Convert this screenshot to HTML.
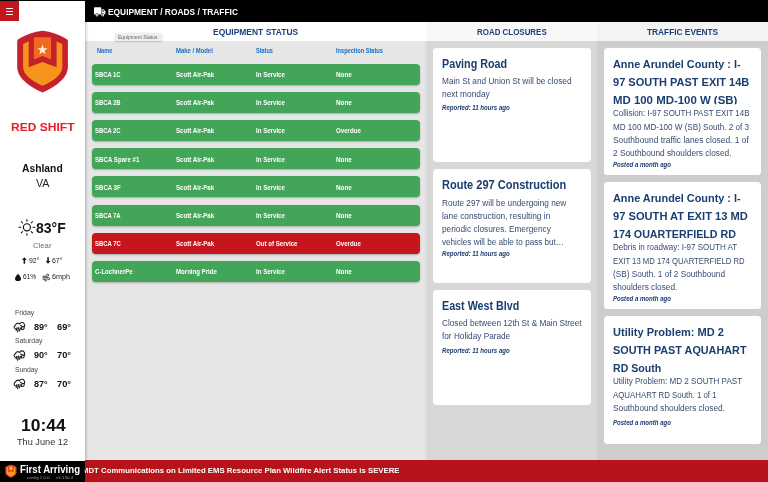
<!DOCTYPE html>
<html><head><meta charset="utf-8">
<style>
*{box-sizing:border-box;margin:0;padding:0}
html,body{width:768px;height:482px;overflow:hidden;background:#d4d4d4;font-family:"Liberation Sans",sans-serif;}
.abs{position:absolute}
.t{position:absolute;white-space:nowrap;line-height:1;transform-origin:0 50%;z-index:6}
#side{left:0;top:0;width:84.8px;height:460.5px;background:#fff;box-shadow:1px 0 3px rgba(0,0,0,.25);z-index:5}
#ham{left:0;top:1px;width:18.9px;height:19.8px;background:#c0161d;z-index:6}
#topline{left:0;top:0;width:768px;height:1.1px;background:#000;z-index:7}
#ham i{position:absolute;left:5.5px;width:7.7px;height:1.3px;background:#fff;border-radius:1px}
#hdr{left:85px;top:0;width:683px;height:22px;background:#000}
#band{left:85px;top:22px;width:682px;height:19px;background:#fff}
#band2{left:427px;top:22px;width:341px;height:19px;background:#f8f8f8}
#band3{left:597px;top:22px;width:171px;height:19px;background:#f3f3f3}
#col1{left:85px;top:41px;width:342px;height:420px;background:#e6e6e6}
#strip{left:424.5px;top:41px;width:2.5px;height:420px;background:#dedede}
#col2{left:427px;top:41px;width:170px;height:420px;background:#d7d7d7}
#col3{left:597px;top:41px;width:171px;height:420px;background:#cdcdcd}
.row{position:absolute;left:92px;width:328px;height:21.1px;border-radius:4px;background:#43a557;box-shadow:0 1px 2px rgba(0,0,0,.25)}
.row.red{background:#c4161c}
.card{position:absolute;background:#fff;border-radius:3.5px}
#tip{left:115.4px;top:33.4px;width:46.2px;height:7.3px;background:#eee;border-radius:1.5px;box-shadow:0 0.5px 1.5px rgba(0,0,0,.3);z-index:8}
#bot1{left:0;top:460.6px;width:84.7px;height:22px;background:#000;z-index:7}
#bot2{left:84px;top:460.2px;width:684px;height:22px;background:#b7131a}
svg{position:absolute;overflow:visible}
</style></head><body>

<div id="hdr" class="abs"></div>
<div id="band" class="abs"></div>
<div id="band2" class="abs"></div>
<div id="band3" class="abs"></div>
<div id="col1" class="abs"></div>
<div id="strip" class="abs"></div>
<div id="col2" class="abs"></div>
<div id="col3" class="abs"></div>
<div class="row" style="top:63.75px"></div><div class="row" style="top:91.90px"></div><div class="row" style="top:120.05px"></div><div class="row" style="top:148.20px"></div><div class="row" style="top:176.35px"></div><div class="row" style="top:204.50px"></div><div class="row red" style="top:232.65px"></div><div class="row" style="top:260.80px"></div>
<div class="card" style="left:433.3px;top:48.2px;width:157.3px;height:113.8px"></div>
<div class="card" style="left:433.3px;top:169.2px;width:157.3px;height:113.8px"></div>
<div class="card" style="left:433.3px;top:290.2px;width:157.3px;height:114.8px"></div>
<div class="card" style="left:604.4px;top:48.3px;width:157.1px;height:127px"></div>
<div class="card" style="left:604.4px;top:182.3px;width:157.1px;height:127px"></div>
<div class="card" style="left:604.4px;top:316.4px;width:157.1px;height:127.4px"></div>
<div id="tip" class="abs"></div>

<div id="side" class="abs"></div>
<div id="ham" class="abs"><i style="top:6.85px"></i><i style="top:9.7px"></i><i style="top:12.55px"></i></div>
<div id="topline" class="abs"></div>
<div id="bot2" class="abs"></div>
<div id="bot1" class="abs"></div>

<!-- full-canvas icon layer -->
<svg style="left:0;top:0;z-index:9" width="768" height="482" viewBox="0 0 768 482">
  <!-- truck -->
  <g fill="#fff">
    <rect x="94" y="7.2" width="7.3" height="7.4" rx="0.7"/>
    <path d="M101.7 9.3 h1.9 l1.7 2 v3.3 h-3.6z"/>
    <path d="M102.4 10.2 h1 l1 1.3 h-2z" fill="#000"/>
    <circle cx="97" cy="15.1" r="1.9" fill="#000"/>
    <circle cx="102.7" cy="15.1" r="1.9" fill="#000"/>
    <circle cx="97" cy="15.1" r="1.45"/>
    <circle cx="102.7" cy="15.1" r="1.45"/>
    <circle cx="97" cy="15.1" r="0.55" fill="#000"/>
    <circle cx="102.7" cy="15.1" r="0.55" fill="#000"/>
  </g>
  <!-- shield -->
  <g>
    <path d="M17.2 41 Q17.2 39.6 18.6 38.9 Q30 32.4 42.5 30.8 Q55 32.4 66.5 38.9 Q67.9 39.6 67.9 41 L67.9 67 Q67.9 81 42.5 92.6 Q17.2 81 17.2 67Z" fill="#c6202a"/>
    <path d="M23.1 44 L29 41.2 L56 41.2 L62.3 44 L62.3 67 Q62.3 77 42.5 85.8 Q23.1 77 23.1 67Z" fill="#f7941e"/>
    <path d="M28.7 36 L56.6 36 L56.6 67.2 L42.5 62 L28.7 67.2Z" fill="#c6202a"/>
    <path d="M33.9 37.2 L51 37.2 L51 59.6 L42.5 55.9 L33.9 59.6Z" fill="#f26a21"/>
    <path id="star" fill="#fff3cf" d="M42.50 44.60 L43.76 48.16 L47.54 48.26 L44.54 50.56 L45.62 54.19 L42.50 52.05 L39.38 54.19 L40.46 50.56 L37.46 48.26 L41.24 48.16Z"/>
  </g>
  <!-- sun -->
  <g stroke="#111" fill="none" stroke-linecap="round">
    <circle cx="26.9" cy="227.3" r="3.55" stroke-width="1.15"/>
    <g stroke-width="1.05">
      <path d="M26.9 219.4v1.8M26.9 233.4v1.8M19 227.3h1.8M33 227.3h1.8M21.3 221.7l1.3 1.3M31.2 231.6l1.3 1.3M32.5 221.7l-1.3 1.3M22.6 231.6l-1.3 1.3"/>
    </g>
  </g>
  <!-- arrows -->
  <g fill="#111">
    <path d="M24.35 257.2 l2.3 2.7 h-1.55 v3.9 h-1.5 v-3.9 h-1.55z"/>
    <path d="M48.05 263.8 l2.3 -2.7 h-1.55 v-3.9 h-1.5 v3.9 h-1.55z"/>
    <!-- drop -->
    <path d="M18 273.8 Q21 277.3 21 278.4 A3 2.6 0 0 1 15 278.4 Q15 277.3 18 273.8Z"/>
  </g>
  <!-- wind -->
  <g stroke="#111" stroke-width="0.8" fill="none" stroke-linecap="round">
    <path d="M43 276.2h4.6a1.1 1.1 0 1 0 -1.1 -1.2"/>
    <path d="M43 277.7h5.6a1 1 0 1 1 -1 1.1"/>
    <path d="M43 279.2h2.6a0.9 0.9 0 1 1 -0.9 1"/>
  </g>
  <!-- clouds -->
  <g stroke="#111" stroke-width="1.05" fill="none" stroke-linecap="round" stroke-linejoin="round">
    <path d="M15.6 329 C13.6 328.4 13.6 325.6 15.6 325.2 C15.8 323.2 18.4 322.6 19.6 324 C20.4 322 23.6 321.8 24.2 324 C25 325 24.8 326.4 24 327 C24.6 328.2 23.8 329.6 22.4 329.6"/>
    <path d="M20.6 325.4 C21.6 326.4 23 326.8 24 326.6"/>
    <path d="M16.9 327.8 l-0.7 2.6 M18.6 327.6 l-1 4.2 M20.3 327.8 l-0.8 3 M21.8 327.4 l-0.5 2" stroke-width="1.15"/>
  </g>
  <g transform="translate(0 28.45)" stroke="#111" stroke-width="1.05" fill="none" stroke-linecap="round" stroke-linejoin="round">
    <path d="M15.6 329 C13.6 328.4 13.6 325.6 15.6 325.2 C15.8 323.2 18.4 322.6 19.6 324 C20.4 322 23.6 321.8 24.2 324 C25 325 24.8 326.4 24 327 C24.6 328.2 23.8 329.6 22.4 329.6"/>
    <path d="M20.6 325.4 C21.6 326.4 23 326.8 24 326.6"/>
    <path d="M16.9 327.8 l-0.7 2.6 M18.6 327.6 l-1 4.2 M20.3 327.8 l-0.8 3 M21.8 327.4 l-0.5 2" stroke-width="1.15"/>
  </g>
  <g transform="translate(0 56.9)" stroke="#111" stroke-width="1.05" fill="none" stroke-linecap="round" stroke-linejoin="round">
    <path d="M15.6 329 C13.6 328.4 13.6 325.6 15.6 325.2 C15.8 323.2 18.4 322.6 19.6 324 C20.4 322 23.6 321.8 24.2 324 C25 325 24.8 326.4 24 327 C24.6 328.2 23.8 329.6 22.4 329.6"/>
    <path d="M20.6 325.4 C21.6 326.4 23 326.8 24 326.6"/>
    <path d="M16.9 327.8 l-0.7 2.6 M18.6 327.6 l-1 4.2 M20.3 327.8 l-0.8 3 M21.8 327.4 l-0.5 2" stroke-width="1.15"/>
  </g>
  <!-- small shield bottom -->
  <g>
    <path d="M5.4 467 Q8 465.2 10.9 464.8 Q13.8 465.2 16.4 467 L16.4 472.5 Q16.4 475.5 10.9 477.8 Q5.4 475.5 5.4 472.5Z" fill="#e8481f"/>
    <path d="M6.7 467.6 L15.1 467.6 L15.1 472.4 Q15.1 474.6 10.9 476.4 Q6.7 474.6 6.7 472.4Z" fill="#f9a11b"/>
    <path d="M8 466 L13.8 466 L13.8 472.6 L10.9 471.4 L8 472.6Z" fill="#e8481f"/>
    <path d="M9.2 466.2 L12.6 466.2 L12.6 470.8 L10.9 470.1 L9.2 470.8Z" fill="#f47a20"/>
    <circle cx="10.9" cy="468.5" r="0.9" fill="#fff3cf"/>
  </g>
</svg>
<div id="txt" style="position:absolute;left:0;top:0;width:768px;height:482px;z-index:10;will-change:transform">
<span class="t" style="left:108.00px;top:7.56px;font-size:9.0px;color:#fff;transform:scaleX(0.9319);font-weight:bold;">EQUIPMENT / ROADS / TRAFFIC</span>
<span class="t" style="left:213.20px;top:27.47px;font-size:9.4px;color:#1b4079;transform:scaleX(0.9021);font-weight:bold;">EQUIPMENT STATUS</span>
<span class="t" style="left:477.20px;top:27.86px;font-size:8.8px;color:#1b4079;transform:scaleX(0.9026);font-weight:bold;">ROAD CLOSURES</span>
<span class="t" style="left:647.10px;top:27.86px;font-size:8.8px;color:#1b4079;transform:scaleX(0.9447);font-weight:bold;">TRAFFIC EVENTS</span>
<span class="t" style="left:117.90px;top:34.59px;font-size:5.0px;color:#666;transform:scaleX(0.9983);z-index:9;">Equipment Status</span>
<span class="t" style="left:97.00px;top:47.72px;font-size:6.6px;color:#1b6ec2;transform:scaleX(0.8575);font-weight:bold;">Name</span>
<span class="t" style="left:176.20px;top:47.72px;font-size:6.6px;color:#1b6ec2;transform:scaleX(0.8967);font-weight:bold;">Make / Model</span>
<span class="t" style="left:256.20px;top:47.72px;font-size:6.6px;color:#1b6ec2;transform:scaleX(0.8386);font-weight:bold;">Status</span>
<span class="t" style="left:335.60px;top:47.72px;font-size:6.6px;color:#1b6ec2;transform:scaleX(0.8534);font-weight:bold;">Inspection Status</span>
<span class="t" style="left:94.90px;top:71.08px;font-size:7.0px;color:#fff;transform:scaleX(0.8396);font-weight:bold;">SBCA 1C</span>
<span class="t" style="left:175.90px;top:71.08px;font-size:7.0px;color:#fff;transform:scaleX(0.8736);font-weight:bold;">Scott Air-Pak</span>
<span class="t" style="left:256.00px;top:71.08px;font-size:7.0px;color:#fff;transform:scaleX(0.8738);font-weight:bold;">In Service</span>
<span class="t" style="left:336.30px;top:71.08px;font-size:7.0px;color:#fff;transform:scaleX(0.9086);font-weight:bold;">None</span>
<span class="t" style="left:94.90px;top:99.23px;font-size:7.0px;color:#fff;transform:scaleX(0.8396);font-weight:bold;">SBCA 2B</span>
<span class="t" style="left:175.90px;top:99.23px;font-size:7.0px;color:#fff;transform:scaleX(0.8736);font-weight:bold;">Scott Air-Pak</span>
<span class="t" style="left:256.00px;top:99.23px;font-size:7.0px;color:#fff;transform:scaleX(0.8738);font-weight:bold;">In Service</span>
<span class="t" style="left:336.30px;top:99.23px;font-size:7.0px;color:#fff;transform:scaleX(0.9086);font-weight:bold;">None</span>
<span class="t" style="left:94.90px;top:127.38px;font-size:7.0px;color:#fff;transform:scaleX(0.8396);font-weight:bold;">SBCA 2C</span>
<span class="t" style="left:175.90px;top:127.38px;font-size:7.0px;color:#fff;transform:scaleX(0.8736);font-weight:bold;">Scott Air-Pak</span>
<span class="t" style="left:256.00px;top:127.38px;font-size:7.0px;color:#fff;transform:scaleX(0.8738);font-weight:bold;">In Service</span>
<span class="t" style="left:336.30px;top:127.38px;font-size:7.0px;color:#fff;transform:scaleX(0.8750);font-weight:bold;">Overdue</span>
<span class="t" style="left:94.90px;top:155.53px;font-size:7.0px;color:#fff;transform:scaleX(0.8750);font-weight:bold;">SBCA Spare #1</span>
<span class="t" style="left:175.90px;top:155.53px;font-size:7.0px;color:#fff;transform:scaleX(0.8736);font-weight:bold;">Scott Air-Pak</span>
<span class="t" style="left:256.00px;top:155.53px;font-size:7.0px;color:#fff;transform:scaleX(0.8738);font-weight:bold;">In Service</span>
<span class="t" style="left:336.30px;top:155.53px;font-size:7.0px;color:#fff;transform:scaleX(0.9086);font-weight:bold;">None</span>
<span class="t" style="left:94.90px;top:183.68px;font-size:7.0px;color:#fff;transform:scaleX(0.8615);font-weight:bold;">SBCA 3F</span>
<span class="t" style="left:175.90px;top:183.68px;font-size:7.0px;color:#fff;transform:scaleX(0.8736);font-weight:bold;">Scott Air-Pak</span>
<span class="t" style="left:256.00px;top:183.68px;font-size:7.0px;color:#fff;transform:scaleX(0.8738);font-weight:bold;">In Service</span>
<span class="t" style="left:336.30px;top:183.68px;font-size:7.0px;color:#fff;transform:scaleX(0.9086);font-weight:bold;">None</span>
<span class="t" style="left:94.90px;top:211.83px;font-size:7.0px;color:#fff;transform:scaleX(0.8396);font-weight:bold;">SBCA 7A</span>
<span class="t" style="left:175.90px;top:211.83px;font-size:7.0px;color:#fff;transform:scaleX(0.8736);font-weight:bold;">Scott Air-Pak</span>
<span class="t" style="left:256.00px;top:211.83px;font-size:7.0px;color:#fff;transform:scaleX(0.8738);font-weight:bold;">In Service</span>
<span class="t" style="left:336.30px;top:211.83px;font-size:7.0px;color:#fff;transform:scaleX(0.9086);font-weight:bold;">None</span>
<span class="t" style="left:94.90px;top:239.98px;font-size:7.0px;color:#fff;transform:scaleX(0.8461);font-weight:bold;">SBCA 7C</span>
<span class="t" style="left:175.90px;top:239.98px;font-size:7.0px;color:#fff;transform:scaleX(0.8736);font-weight:bold;">Scott Air-Pak</span>
<span class="t" style="left:256.00px;top:239.98px;font-size:7.0px;color:#fff;transform:scaleX(0.8750);font-weight:bold;">Out of Service</span>
<span class="t" style="left:336.30px;top:239.98px;font-size:7.0px;color:#fff;transform:scaleX(0.8750);font-weight:bold;">Overdue</span>
<span class="t" style="left:94.90px;top:268.13px;font-size:7.0px;color:#fff;transform:scaleX(0.8654);font-weight:bold;">C-LochnerPe</span>
<span class="t" style="left:175.90px;top:268.13px;font-size:7.0px;color:#fff;transform:scaleX(0.8671);font-weight:bold;">Morning Pride</span>
<span class="t" style="left:256.00px;top:268.13px;font-size:7.0px;color:#fff;transform:scaleX(0.8738);font-weight:bold;">In Service</span>
<span class="t" style="left:336.30px;top:268.13px;font-size:7.0px;color:#fff;transform:scaleX(0.9086);font-weight:bold;">None</span>
<span class="t" style="left:10.80px;top:122.06px;font-size:11.5px;color:#ea1c24;transform:scaleX(1.0462);font-weight:bold;">RED SHIFT</span>
<span class="t" style="left:22.40px;top:163.34px;font-size:10.5px;color:#111;transform:scaleX(0.9826);font-weight:bold;">Ashland</span>
<span class="t" style="left:36.00px;top:178.68px;font-size:10px;color:#222;transform:scaleX(1.0716);">VA</span>
<span class="t" style="left:36.00px;top:220.85px;font-size:14px;color:#111;transform:scaleX(1.0026);font-weight:bold;">83°F</span>
<span class="t" style="left:33.00px;top:241.94px;font-size:8px;color:#6b6b6b;transform:scaleX(0.9677);">Clear</span>
<span class="t" style="left:28.70px;top:257.87px;font-size:6.7px;color:#222;transform:scaleX(1.0383);">92°</span>
<span class="t" style="left:52.40px;top:257.87px;font-size:6.7px;color:#222;transform:scaleX(1.0383);">67°</span>
<span class="t" style="left:22.80px;top:274.47px;font-size:6.7px;color:#222;transform:scaleX(0.9862);">61%</span>
<span class="t" style="left:51.80px;top:274.47px;font-size:6.7px;color:#222;transform:scaleX(1.0760);">6mph</span>
<span class="t" style="left:14.70px;top:309.03px;font-size:7px;color:#444;transform:scaleX(0.9872);">Friday</span>
<span class="t" style="left:33.70px;top:322.66px;font-size:9px;color:#111;transform:scaleX(1.0066);font-weight:bold;">89°</span>
<span class="t" style="left:56.70px;top:322.66px;font-size:9px;color:#111;transform:scaleX(1.0287);font-weight:bold;">69°</span>
<span class="t" style="left:14.70px;top:337.48px;font-size:7px;color:#444;transform:scaleX(0.9780);">Saturday</span>
<span class="t" style="left:33.70px;top:351.11px;font-size:9px;color:#111;transform:scaleX(1.0066);font-weight:bold;">90°</span>
<span class="t" style="left:56.70px;top:351.11px;font-size:9px;color:#111;transform:scaleX(1.0287);font-weight:bold;">70°</span>
<span class="t" style="left:14.70px;top:365.93px;font-size:7px;color:#444;transform:scaleX(0.9688);">Sunday</span>
<span class="t" style="left:33.70px;top:379.56px;font-size:9px;color:#111;transform:scaleX(1.0066);font-weight:bold;">87°</span>
<span class="t" style="left:56.70px;top:379.56px;font-size:9px;color:#111;transform:scaleX(1.0287);font-weight:bold;">70°</span>
<span class="t" style="left:20.60px;top:416.51px;font-size:17px;color:#111;transform:scaleX(1.0258);font-weight:bold;">10:44</span>
<span class="t" style="left:17.25px;top:438.06px;font-size:9px;color:#333;transform:scaleX(1.0203);">Thu June 12</span>
<span class="t" style="left:19.90px;top:465.39px;font-size:10.4px;color:#fff;transform:scaleX(0.9258);font-weight:bold;z-index:8;">First Arriving</span>
<span class="t" style="left:26.70px;top:475.68px;font-size:4.2px;color:#999;transform:scaleX(1.0392);z-index:8;">config 1.0.0</span>
<span class="t" style="left:56.00px;top:475.68px;font-size:4.2px;color:#999;transform:scaleX(1.0706);z-index:8;">v3.130.4</span>
<span class="t" style="left:82.00px;top:467.19px;font-size:7.9px;color:#fff;transform:scaleX(0.9864);font-weight:bold;clip-path:inset(0 0 0 2.75px);">MDT Communications on Limited EMS Resource Plan Wildfire Alert Status is SEVERE</span>
<span class="t" style="left:442.30px;top:57.52px;font-size:12px;color:#193e6f;transform:scaleX(0.8957);font-weight:bold;">Paving Road</span>
<span class="t" style="left:442.30px;top:77.05px;font-size:8.4px;color:#364c70;transform:scaleX(0.9865);">Main St and Union St will be closed</span>
<span class="t" style="left:442.30px;top:90.20px;font-size:8.4px;color:#364c70;transform:scaleX(0.9968);">next monday</span>
<span class="t" style="left:442.30px;top:105.47px;font-size:6.7px;color:#1b3c6e;transform:scaleX(0.9080);font-weight:bold;font-style:italic;">Reported: 11 hours ago</span>
<span class="t" style="left:442.30px;top:178.52px;font-size:12px;color:#193e6f;transform:scaleX(0.9184);font-weight:bold;">Route 297 Construction</span>
<span class="t" style="left:442.30px;top:198.65px;font-size:8.4px;color:#364c70;transform:scaleX(0.9851);">Route 297 will be undergoing new</span>
<span class="t" style="left:442.30px;top:211.80px;font-size:8.4px;color:#364c70;transform:scaleX(0.9984);">lane construction, resulting in</span>
<span class="t" style="left:442.30px;top:224.95px;font-size:8.4px;color:#364c70;transform:scaleX(0.9913);">periodic closures. Emergency</span>
<span class="t" style="left:442.30px;top:238.10px;font-size:8.4px;color:#364c70;transform:scaleX(0.9706);">vehicles will be able to pass but…</span>
<span class="t" style="left:442.30px;top:250.57px;font-size:6.7px;color:#1b3c6e;transform:scaleX(0.9080);font-weight:bold;font-style:italic;">Reported: 11 hours ago</span>
<span class="t" style="left:442.30px;top:299.52px;font-size:12px;color:#193e6f;transform:scaleX(0.8939);font-weight:bold;">East West Blvd</span>
<span class="t" style="left:442.30px;top:319.25px;font-size:8.4px;color:#364c70;transform:scaleX(0.9825);">Closed between 12th St &amp; Main Street</span>
<span class="t" style="left:442.30px;top:332.40px;font-size:8.4px;color:#364c70;transform:scaleX(0.9832);">for Holiday Parade</span>
<span class="t" style="left:442.30px;top:347.97px;font-size:6.7px;color:#1b3c6e;transform:scaleX(0.9080);font-weight:bold;font-style:italic;">Reported: 11 hours ago</span>
<span class="t" style="left:613.10px;top:58.80px;font-size:11px;color:#193e6f;transform:scaleX(0.9881);font-weight:bold;">Anne Arundel County : I-</span>
<span class="t" style="left:613.10px;top:76.95px;font-size:11px;color:#193e6f;transform:scaleX(1.0014);font-weight:bold;">97 SOUTH PAST EXIT 14B</span>
<span class="t" style="left:613.10px;top:95.10px;font-size:11px;color:#193e6f;transform:scaleX(1.0376);font-weight:bold;clip-path:inset(0 0 1.9px 0);">MD 100 MD-100 W (SB)</span>
<span class="t" style="left:612.70px;top:109.40px;font-size:8.3px;color:#364c70;transform:scaleX(0.9581);">Collision: I-97 SOUTH PAST EXIT 14B</span>
<span class="t" style="left:612.70px;top:122.55px;font-size:8.3px;color:#364c70;transform:scaleX(0.9773);">MD 100 MD-100 W (SB) South. 2 of 3</span>
<span class="t" style="left:612.70px;top:135.70px;font-size:8.3px;color:#364c70;transform:scaleX(1.0129);">Southbound traffic lanes closed. 1 of</span>
<span class="t" style="left:612.70px;top:148.85px;font-size:8.3px;color:#364c70;transform:scaleX(0.9996);">2 Southbound shoulders closed.</span>
<span class="t" style="left:612.80px;top:161.57px;font-size:6.7px;color:#1b3c6e;transform:scaleX(0.9060);font-weight:bold;font-style:italic;">Posted a month ago</span>
<span class="t" style="left:613.10px;top:192.80px;font-size:11px;color:#193e6f;transform:scaleX(0.9881);font-weight:bold;">Anne Arundel County : I-</span>
<span class="t" style="left:613.10px;top:210.95px;font-size:11px;color:#193e6f;transform:scaleX(1.0116);font-weight:bold;">97 SOUTH AT EXIT 13 MD</span>
<span class="t" style="left:613.10px;top:229.10px;font-size:11px;color:#193e6f;transform:scaleX(0.9722);font-weight:bold;clip-path:inset(0 0 1.9px 0);">174 QUARTERFIELD RD</span>
<span class="t" style="left:612.70px;top:243.40px;font-size:8.3px;color:#364c70;transform:scaleX(0.9671);">Debris in roadway: I-97 SOUTH AT</span>
<span class="t" style="left:612.70px;top:256.55px;font-size:8.3px;color:#364c70;transform:scaleX(0.9284);">EXIT 13 MD 174 QUARTERFIELD RD</span>
<span class="t" style="left:612.70px;top:269.70px;font-size:8.3px;color:#364c70;transform:scaleX(0.9911);">(SB) South. 1 of 2 Southbound</span>
<span class="t" style="left:612.70px;top:282.85px;font-size:8.3px;color:#364c70;transform:scaleX(0.9958);">shoulders closed.</span>
<span class="t" style="left:612.80px;top:295.67px;font-size:6.7px;color:#1b3c6e;transform:scaleX(0.9060);font-weight:bold;font-style:italic;">Posted a month ago</span>
<span class="t" style="left:613.10px;top:326.80px;font-size:11px;color:#193e6f;transform:scaleX(1.0025);font-weight:bold;">Utility Problem: MD 2</span>
<span class="t" style="left:613.10px;top:344.95px;font-size:11px;color:#193e6f;transform:scaleX(0.9840);font-weight:bold;">SOUTH PAST AQUAHART</span>
<span class="t" style="left:613.10px;top:363.10px;font-size:11px;color:#193e6f;transform:scaleX(0.9620);font-weight:bold;clip-path:inset(0 0 1.9px 0);">RD South</span>
<span class="t" style="left:612.70px;top:377.40px;font-size:8.3px;color:#364c70;transform:scaleX(0.9735);">Utility Problem: MD 2 SOUTH PAST</span>
<span class="t" style="left:612.70px;top:390.55px;font-size:8.3px;color:#364c70;transform:scaleX(0.9462);">AQUAHART RD South. 1 of 1</span>
<span class="t" style="left:612.70px;top:403.70px;font-size:8.3px;color:#364c70;transform:scaleX(1.0033);">Southbound shoulders closed.</span>
<span class="t" style="left:612.80px;top:419.67px;font-size:6.7px;color:#1b3c6e;transform:scaleX(0.9060);font-weight:bold;font-style:italic;">Posted a month ago</span>
</div>
</body></html>
